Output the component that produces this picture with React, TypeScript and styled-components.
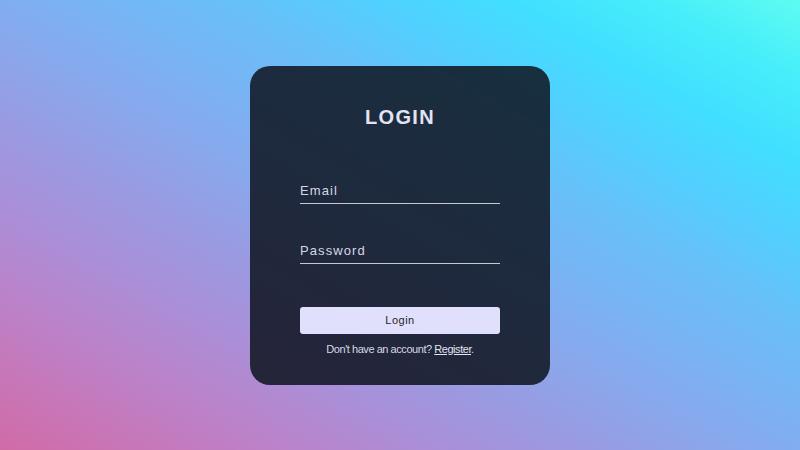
import React from "react";
import styled, { createGlobalStyle } from "styled-components";

const Global = createGlobalStyle`
  html, body { margin: 0; padding: 0; height: 100%; }
  body { font-family: "Liberation Sans", Arial, sans-serif; }
  #root { height: 100%; }
  * { box-sizing: border-box; }
`;

const Page = styled.div`
  height: 100vh;
  display: flex;
  align-items: center;
  justify-content: center;
  background: linear-gradient(
    to right top,
    #d16ba5, #c777b9, #ba83ca, #aa8fd8, #9a9ae1, #8aa7ec,
    #79b3f4, #69bff8, #52cffe, #41dfff, #46eefa, #5ffbf1
  );
`;

const Card = styled.form`
  width: 300px;
  padding: 39px 50px 29px;
  border-radius: 20px;
  background: rgba(14, 20, 32, 0.86);
  display: flex;
  flex-direction: column;
  align-items: stretch;
`;

const Title = styled.h1`
  margin: 0;
  font-size: 20px;
  line-height: 24px;
  font-weight: 700;
  letter-spacing: 1.3px;
  text-align: center;
  color: #e2e4f4;
`;

const Field = styled.input<{ $top: number }>`
  display: block;
  box-sizing: content-box;
  width: 200px;
  height: 15px;
  line-height: 15px;
  margin: ${(p) => p.$top}px 0 0;
  padding: 0 0 5px;
  border: none;
  border-bottom: 1px solid #c4c8d6;
  background: transparent;
  font-family: "Liberation Sans", Arial, sans-serif;
  font-size: 13px;
  letter-spacing: 1.1px;
  color: #e4e4f2;
  outline: none;
  &::placeholder {
    color: #d6d8e8;
    opacity: 1;
  }
`;

const Button = styled.button`
  margin-top: 43px;
  height: 27px;
  width: 100%;
  border: none;
  border-radius: 3px;
  background: #e1e0fc;
  color: #1e1e2a;
  font-family: "Liberation Sans", Arial, sans-serif;
  font-size: 11px;
  letter-spacing: 0.5px;
  cursor: pointer;
`;

const Footer = styled.p`
  margin: 8px 0 0;
  font-family: "Liberation Sans", Arial, sans-serif;
  font-size: 11px;
  line-height: 14px;
  letter-spacing: -0.45px;
  text-align: center;
  color: #d6d8e6;
  a { color: #e4e4f0; text-decoration: underline; }
`;

export default function App() {
  return (
    <>
      <Global />
      <Page>
        <Card onSubmit={(e) => e.preventDefault()}>
          <Title>LOGIN</Title>
          <Field $top={54} type="email" placeholder="Email" />
          <Field $top={39} type="password" placeholder="Password" />
          <Button type="submit">Login</Button>
          <Footer>
            Don't have an account? <a href="#">Register</a>.
          </Footer>
        </Card>
      </Page>
    </>
  );
}
